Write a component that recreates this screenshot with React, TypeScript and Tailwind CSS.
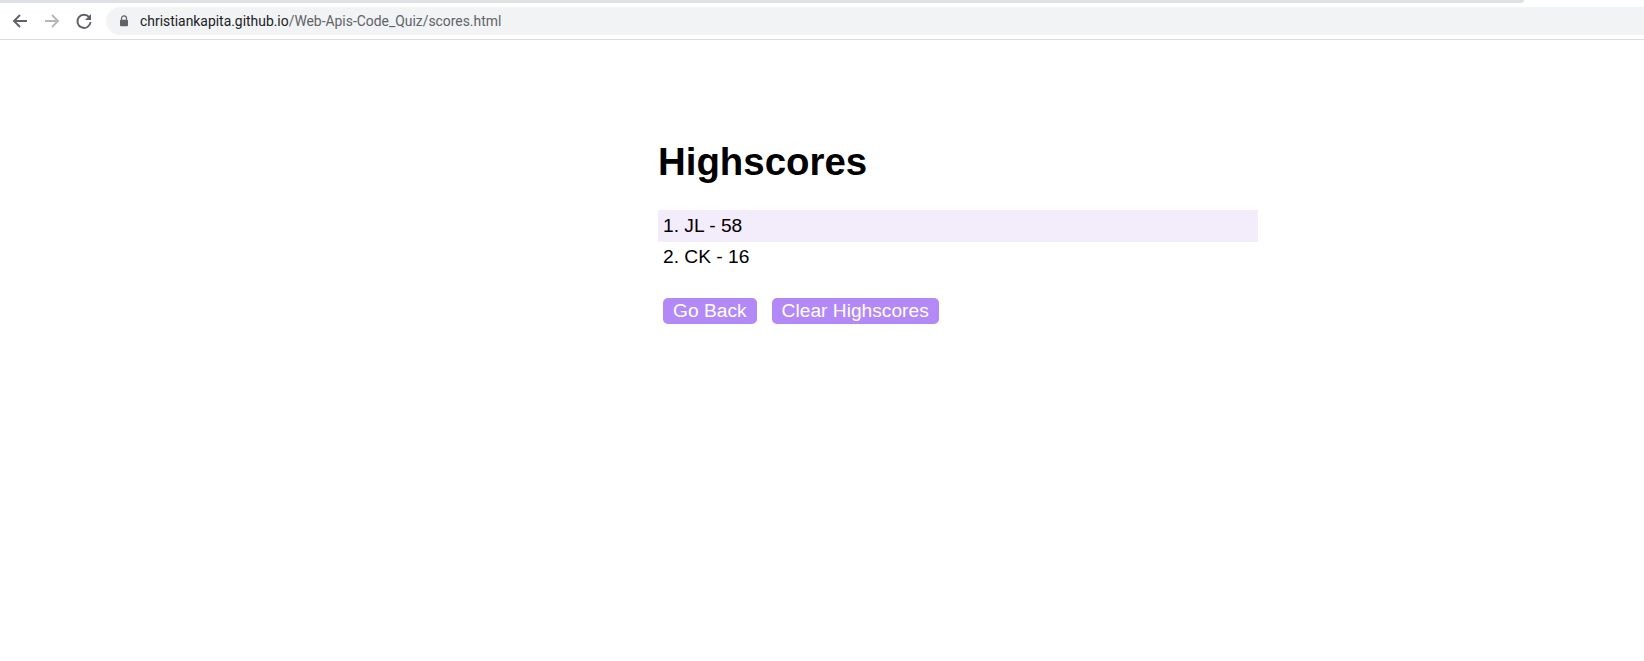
import React from 'react';

const scores = ['1. JL - 58', '2. CK - 16'];

const App: React.FC = () => {
  return (
    <div className="min-h-screen bg-white font-['Liberation_Sans',Arial,sans-serif] text-black">
      {/* Browser chrome */}
      <div className="h-[40px] border-b border-[#dadce0] bg-white">
        <div className="h-[3px] w-[1524px] rounded-br-[4px] bg-[#dee1e6]" />
        <div className="mt-[4px] flex h-[28px] items-center">
          <div className="flex w-[106px] items-center pl-[11px]">
            <svg width="18" height="18" viewBox="0 0 18 18" fill="none" stroke="#5f6368" strokeWidth="1.9">
              <path d="M16 9H3M9 3 3 9l6 6" />
            </svg>
            <svg className="ml-[14px]" width="18" height="18" viewBox="0 0 18 18" fill="none" stroke="#b4b6b9" strokeWidth="1.9">
              <path d="M2 9h13M9 3l6 6-6 6" />
            </svg>
            <svg className="ml-[14px]" width="18" height="18" viewBox="0 0 18 18" fill="none">
              <path d="M14.2 5.2A6.6 6.6 0 1 0 15.6 10" stroke="#5f6368" strokeWidth="1.9" />
              <path d="M16 2v6h-6z" fill="#5f6368" />
            </svg>
          </div>
          <div className="flex h-[28px] flex-1 items-center rounded-l-[14px] bg-[#f1f3f4] pl-[13px]">
            <svg width="10" height="12" viewBox="0 0 10 12">
              <path d="M2.5 5V3.4a2.5 2.5 0 0 1 5 0V5" fill="none" stroke="#5f6368" strokeWidth="1.2" />
              <rect x="1" y="4.8" width="8" height="6.4" rx="1" fill="#5f6368" />
            </svg>
            <span className="ml-[11px] font-['Roboto',sans-serif] text-[13.9px] text-[#202124]">
              christiankapita.github.io
              <span className="text-[#5f6368]">/Web-Apis-Code_Quiz/scores.html</span>
            </span>
          </div>
        </div>
      </div>

      {/* Scores card */}
      <div className="ml-[658px] w-[600px] pt-[99px]">
        <h1 className="text-[38.4px] leading-[46px] font-bold">Highscores</h1>
        <ul className="mt-[25px]">
          {scores.map((score, i) => (
            <li
              key={score}
              className={`flex items-center pl-[5px] text-[19.2px] ${i === 0 ? 'h-[32px] bg-[#f3ecfb]' : 'h-[31px]'}`}
            >
              {score}
            </li>
          ))}
        </ul>
        <div className="mt-[25px] flex gap-[15px] pl-[5px]">
          <button className="h-[26px] rounded-[5px] bg-[#b388f7] px-[10px] text-[19.2px] leading-[26px] text-white">
            Go Back
          </button>
          <button className="h-[26px] rounded-[5px] bg-[#b388f7] px-[10px] text-[19.2px] leading-[26px] text-white">
            Clear Highscores
          </button>
        </div>
      </div>
    </div>
  );
};

export default App;
